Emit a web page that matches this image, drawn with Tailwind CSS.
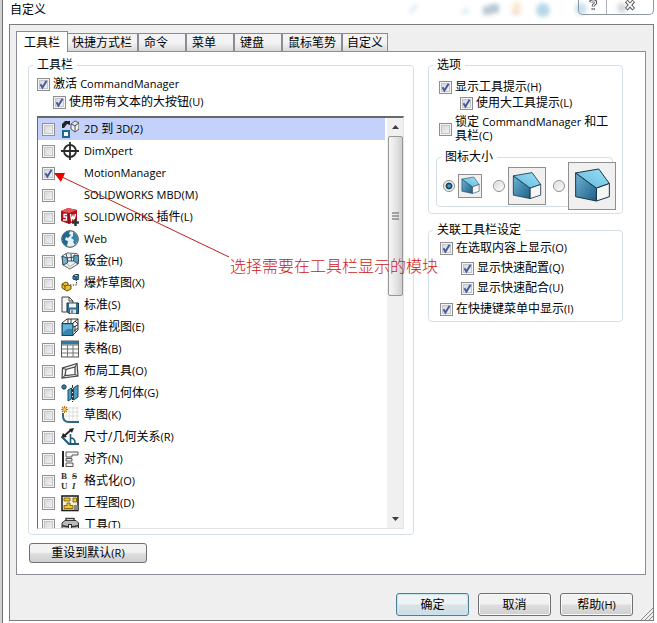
<!DOCTYPE html>
<html lang="zh-CN" class="bg-[#d2d2d2]">
<head>
    <meta charset="UTF-8">
    <meta name="viewport" content="width=device-width, initial-scale=1.0">
    <title>自定义</title>
    <script src="https://cdn.jsdelivr.net/npm/@tailwindcss/browser@4"></script>
</head>
<body class="relative ml-[2px] h-screen min-h-[560px] flex flex-col overflow-hidden bg-white border-l border-[#6f6f6f] pl-[6px] pr-[3px] pb-[2px] font-['Open_Sans','Noto_Sans_CJK_SC',sans-serif] text-xs text-black">

    <!-- shared shapes -->
    <svg class="absolute size-0">
        <linearGradient id="side" x1="0" y1="0" x2="1" y2="1"><stop offset="0" stop-color="#6fb4d6"/><stop offset="1" stop-color="#1d5f86"/></linearGradient>
        <linearGradient id="top" x1="0" y1="1" x2="1" y2="0"><stop offset="0" stop-color="#5fb6dc"/><stop offset="1" stop-color="#9be0f8"/></linearGradient>
        <symbol id="tick" viewBox="0 0 13 13"><path d="M3.5 6.2 5.4 9.6 9.6 2.8" fill="none" stroke="#45589b" stroke-width="1.9"/></symbol>
        <symbol id="cube" viewBox="0 0 112 112">
            <g stroke="#16323f" stroke-width="3" stroke-linejoin="round">
                <path d="M5 18 68 64V103L5 90Z" fill="url(#side)"/>
                <path d="M5 18 75 6 107 50 68 64Z" fill="url(#top)"/>
                <path d="M68 64 107 50V90L68 103Z" fill="#f4f6f7"/>
            </g>
        </symbol>
    </svg>

    <!-- title bar -->
    <header class="relative h-6 shrink-0 flex items-start justify-between">
        <svg class="absolute right-0 top-0 w-[250px] h-5 blur-[2px] opacity-80" viewBox="0 0 250 20">
            <path d="M6 13 13 5" stroke="#d3e6f3" stroke-width="4"/>
            <path d="M56 14 64 6V14Z" fill="#cde6f2"/>
            <rect x="79" y="6" width="9" height="9" fill="#a9bcc9"/><rect x="86" y="4" width="9" height="9" fill="#a3b9c9"/>
            <rect x="109" y="3" width="8" height="5" fill="#f8dfae"/><rect x="108" y="9" width="8" height="6" fill="#f3d3c4"/>
            <circle cx="139" cy="10" r="7" fill="#a5cfe4"/>
            <circle cx="177" cy="9" r="6" fill="#b8d9ea"/><circle cx="218" cy="8" r="5" fill="#c9ccd0"/>
        </svg>
        <h1 class="pl-px leading-[19px]">自定义</h1>
        <div class="relative flex h-[15px] w-[76px] rounded-b-[5px] border border-t-0 border-[#8f979e] overflow-hidden">
            <button class="w-[28px] border-r border-[#a9b0b6] flex justify-center" aria-label="帮助">
                <svg class="w-3 h-[11px]" viewBox="0 0 12 12" fill="none"><path d="M3.3 2.5C4 0 9.3 0 8.9 3 8.6 4.8 6.2 4.6 6.2 7M6.2 8.6V11" stroke="#4b4f55" stroke-width="3.4"/><path d="M3.5 2.3C4.4.4 9 .4 8.8 3 8.6 4.6 6.2 4.6 6.2 6.8M6.2 9V10.6" stroke="#fff" stroke-width="1.4"/></svg>
            </button>
            <button class="flex-1 flex justify-center" aria-label="关闭">
                <svg class="w-3 h-[11px]" viewBox="0 0 12 12" fill="none"><path d="M2 1 10 10M10 1 2 10" stroke="#4b4f55" stroke-width="4"/><path d="M2.500 1.500 9.500 9.500M9.500 1.500 2.500 9.500" stroke="#fff" stroke-width="2"/></svg>
            </button>
        </div>
    </header>

    <main class="relative flex-1 min-h-0 flex flex-col border border-[#7c7c7c] bg-[#efefef] pl-[6px] pr-[7px]">
        <!-- tabs -->
        <nav class="h-[26px] shrink-0 flex items-end text-left">
            <button class="relative -mb-px h-[21px] px-[7px] border border-b-0 border-[#898c95] bg-white text-left leading-[17px]">工具栏</button>
            <button class="h-[18px] pl-1 pr-[5px] border border-l-0 border-b-0 border-[#898c95] bg-linear-to-b from-[#f3f3f3] from-50% to-[#d9d9d9] text-left leading-[17px]">快捷方式栏</button>
            <button class="h-[18px] min-w-12 px-[5px] border border-b-0 border-[#898c95] bg-linear-to-b from-[#f3f3f3] from-50% to-[#d9d9d9] text-left leading-[17px]">命令</button>
            <button class="h-[18px] min-w-12 px-[5px] border border-b-0 border-[#898c95] bg-linear-to-b from-[#f3f3f3] from-50% to-[#d9d9d9] text-left leading-[17px]">菜单</button>
            <button class="h-[18px] min-w-12 px-[5px] border border-b-0 border-[#898c95] bg-linear-to-b from-[#f3f3f3] from-50% to-[#d9d9d9] text-left leading-[17px]">键盘</button>
            <button class="h-[18px] px-[5px] border border-b-0 border-[#898c95] bg-linear-to-b from-[#f3f3f3] from-50% to-[#d9d9d9] text-left leading-[17px]">鼠标笔势</button>
            <button class="h-[18px] px-1 border border-b-0 border-[#898c95] bg-linear-to-b from-[#f3f3f3] from-50% to-[#d9d9d9] text-left leading-[17px]">自定义</button>
        </nav>

        <!-- tab page -->
        <section class="flex-1 min-h-0 flex flex-col border border-[#898c95] bg-white pl-[11px] pr-[22px] pt-[5px] pb-[11px]">
            <div class="flex-1 min-h-0 flex gap-[14px]">

                <fieldset class="flex-1 min-w-0 flex flex-col rounded-[4px] border border-[#d5dfe5] pl-2 pr-[9px] pt-[2px] pb-[5px]">
                    <legend class="-ml-1 px-1 leading-4">工具栏</legend>
                    <label class="flex items-center gap-[3px] h-[18px]"><span class="grid shrink-0"><input type="checkbox" checked class="peer col-start-1 row-start-1 size-[13px] appearance-none border border-[#8e8f8f] bg-linear-to-br from-[#cfd3d8] to-[#f7f7f7] shadow-[inset_0_0_0_1px_#f4f4f4,inset_0_0_0_2px_#c3c7cd]"><svg class="hidden peer-checked:block col-start-1 row-start-1 size-[13px] pointer-events-none"><use href="#tick"/></svg></span><span>激活 <span class="text-[11px]">CommandManager</span></span></label>
                    <label class="flex items-center gap-[3px] h-[18px] pl-4"><span class="grid shrink-0"><input type="checkbox" checked class="peer col-start-1 row-start-1 size-[13px] appearance-none border border-[#8e8f8f] bg-linear-to-br from-[#cfd3d8] to-[#f7f7f7] shadow-[inset_0_0_0_1px_#f4f4f4,inset_0_0_0_2px_#c3c7cd]"><svg class="hidden peer-checked:block col-start-1 row-start-1 size-[13px] pointer-events-none"><use href="#tick"/></svg></span><span>使用带有文本的大按钮<span class="text-[11px]">(U)</span></span></label>

                    <div class="mt-[5px] flex-1 min-h-0 flex border-l border-t-2 border-r border-b border-l-[#696969] border-t-[#696969] border-r-[#e3e3e3] border-b-[#e3e3e3]">
                        <ul id="toolbars" class="flex-1 overflow-hidden"></ul>
                        <div class="w-[18px] shrink-0 flex flex-col items-center bg-[#f0f0f0] border-l-2 border-white">
                            <button class="h-[18px] w-full grid place-items-center" aria-label="向上"><svg class="w-[7px] h-1" viewBox="0 0 7 4"><path d="M0 4 3.5 0 7 4Z" fill="#3c3c3c"/></svg></button>
                            <div class="h-[39%] w-[15px] rounded-[2px] border border-[#979797] bg-linear-to-r from-[#f5f5f5] via-[#e6e6e6] to-[#cfcfcf] grid place-items-center">
                                <svg class="w-[7px] h-2" viewBox="0 0 7 8"><path d="M0 1H7M0 4H7M0 7H7" stroke="#5c5c5c"/></svg>
                            </div>
                            <button class="mt-auto h-[18px] w-full grid place-items-center" aria-label="向下"><svg class="w-[7px] h-1" viewBox="0 0 7 4"><path d="M0 0 3.5 4 7 0Z" fill="#3c3c3c"/></svg></button>
                        </div>
                    </div>
                </fieldset>

                <div class="w-[195px] shrink-0 flex flex-col gap-2">
                    <fieldset class="min-w-0 rounded-[4px] border border-[#d5dfe5] pt-[6px] pb-[6px]">
                        <legend class="ml-1 px-1 leading-4">选项</legend>
                        <label class="flex items-center gap-[3px] h-4 pl-[10px]"><span class="grid shrink-0"><input type="checkbox" checked class="peer col-start-1 row-start-1 size-[13px] appearance-none border border-[#8e8f8f] bg-linear-to-br from-[#cfd3d8] to-[#f7f7f7] shadow-[inset_0_0_0_1px_#f4f4f4,inset_0_0_0_2px_#c3c7cd]"><svg class="hidden peer-checked:block col-start-1 row-start-1 size-[13px] pointer-events-none"><use href="#tick"/></svg></span><span>显示工具提示<span class="text-[11px]">(H)</span></span></label>
                        <label class="flex items-center gap-[3px] h-4 pl-[31px]"><span class="grid shrink-0"><input type="checkbox" checked class="peer col-start-1 row-start-1 size-[13px] appearance-none border border-[#8e8f8f] bg-linear-to-br from-[#cfd3d8] to-[#f7f7f7] shadow-[inset_0_0_0_1px_#f4f4f4,inset_0_0_0_2px_#c3c7cd]"><svg class="hidden peer-checked:block col-start-1 row-start-1 size-[13px] pointer-events-none"><use href="#tick"/></svg></span><span>使用大工具提示<span class="text-[11px]">(L)</span></span></label>
                        <label class="mt-1 flex items-center gap-[3px] pl-[10px] leading-[14px]"><span class="grid shrink-0"><input type="checkbox" class="peer col-start-1 row-start-1 size-[13px] appearance-none border border-[#8e8f8f] bg-linear-to-br from-[#cfd3d8] to-[#f7f7f7] shadow-[inset_0_0_0_1px_#f4f4f4,inset_0_0_0_2px_#c3c7cd]"><svg class="hidden peer-checked:block col-start-1 row-start-1 size-[13px] pointer-events-none"><use href="#tick"/></svg></span><span>锁定 <span class="text-[11px]">CommandManager</span> 和工<br>具栏<span class="text-[11px]">(C)</span></span></label>

                        <fieldset class="mt-[6px] ml-[7px] mr-[9px] min-w-0 rounded-[4px] border border-[#d5dfe5] pl-[6px]">
                            <legend class="-ml-[2px] px-1 leading-4">图标大小</legend>
                            <div class="h-[41px] flex items-center">
                                <label class="mr-[11px] shrink-0 flex items-center gap-[3px]">
                                    <input type="radio" name="size" checked aria-label="小" class="size-3 appearance-none rounded-full border border-[#8e8f8f] bg-linear-to-br from-[#d5d7da] to-white shadow-[inset_0_0_0_1px_#f4f4f4] checked:bg-radial checked:from-[#4aa3cf] checked:from-10% checked:via-[#16394d] checked:via-40% checked:to-[#e8eef2] checked:to-55%">
                                    <span class="size-6 grid place-items-center border border-[#8e8f8f] bg-[#f0f0f0]"><svg class="size-[19px]"><use href="#cube"/></svg></span>
                                </label>
                                <label class="mr-[7px] shrink-0 flex items-center gap-[3px]">
                                    <input type="radio" name="size" aria-label="中" class="size-3 appearance-none rounded-full border border-[#8e8f8f] bg-linear-to-br from-[#d5d7da] to-white shadow-[inset_0_0_0_1px_#f4f4f4]">
                                    <span class="size-[38px] grid place-items-center border border-[#8e8f8f] bg-[#f0f0f0]"><svg class="size-[30px]"><use href="#cube"/></svg></span>
                                </label>
                                <label class="shrink-0 flex items-center gap-[3px]">
                                    <input type="radio" name="size" aria-label="大" class="size-3 appearance-none rounded-full border border-[#8e8f8f] bg-linear-to-br from-[#d5d7da] to-white shadow-[inset_0_0_0_1px_#f4f4f4]">
                                    <span class="size-12 grid place-items-center border border-[#8e8f8f] bg-[#f0f0f0]"><svg class="size-[37px]"><use href="#cube"/></svg></span>
                                </label>
                            </div>
                        </fieldset>
                    </fieldset>

                    <fieldset class="min-w-0 rounded-[4px] border border-[#d5dfe5] pb-[2px]">
                        <legend class="ml-1 px-1 leading-4">关联工具栏设定</legend>
                        <label class="flex items-center gap-[3px] h-5 pl-[11px]"><span class="grid shrink-0"><input type="checkbox" checked class="peer col-start-1 row-start-1 size-[13px] appearance-none border border-[#8e8f8f] bg-linear-to-br from-[#cfd3d8] to-[#f7f7f7] shadow-[inset_0_0_0_1px_#f4f4f4,inset_0_0_0_2px_#c3c7cd]"><svg class="hidden peer-checked:block col-start-1 row-start-1 size-[13px] pointer-events-none"><use href="#tick"/></svg></span><span>在选取内容上显示<span class="text-[11px]">(O)</span></span></label>
                        <label class="flex items-center gap-[3px] h-5 pl-8"><span class="grid shrink-0"><input type="checkbox" checked class="peer col-start-1 row-start-1 size-[13px] appearance-none border border-[#8e8f8f] bg-linear-to-br from-[#cfd3d8] to-[#f7f7f7] shadow-[inset_0_0_0_1px_#f4f4f4,inset_0_0_0_2px_#c3c7cd]"><svg class="hidden peer-checked:block col-start-1 row-start-1 size-[13px] pointer-events-none"><use href="#tick"/></svg></span><span>显示快速配置<span class="text-[11px]">(Q)</span></span></label>
                        <label class="flex items-center gap-[3px] h-5 pl-8"><span class="grid shrink-0"><input type="checkbox" checked class="peer col-start-1 row-start-1 size-[13px] appearance-none border border-[#8e8f8f] bg-linear-to-br from-[#cfd3d8] to-[#f7f7f7] shadow-[inset_0_0_0_1px_#f4f4f4,inset_0_0_0_2px_#c3c7cd]"><svg class="hidden peer-checked:block col-start-1 row-start-1 size-[13px] pointer-events-none"><use href="#tick"/></svg></span><span>显示快速配合<span class="text-[11px]">(U)</span></span></label>
                        <label class="mt-px flex items-center gap-[3px] h-5 pl-[11px]"><span class="grid shrink-0"><input type="checkbox" checked class="peer col-start-1 row-start-1 size-[13px] appearance-none border border-[#8e8f8f] bg-linear-to-br from-[#cfd3d8] to-[#f7f7f7] shadow-[inset_0_0_0_1px_#f4f4f4,inset_0_0_0_2px_#c3c7cd]"><svg class="hidden peer-checked:block col-start-1 row-start-1 size-[13px] pointer-events-none"><use href="#tick"/></svg></span><span>在快捷键菜单中显示<span class="text-[11px]">(I)</span></span></label>
                    </fieldset>
                </div>
            </div>

            <button class="mt-2 ml-px self-start w-[118px] h-5 flex items-center justify-center rounded-[3px] border border-[#707070] bg-linear-to-b from-[#f2f2f2] from-45% via-[#dddddd] via-55% to-[#cfcfcf]"><span>重设到默认<span class="text-[11px]">(R)</span></span></button>
        </section>

        <footer class="shrink-0 flex justify-end gap-[9px] pt-[18px] pb-1 pr-[13px]">
            <button class="w-[73px] h-[23px] rounded-[3px] border border-[#4d7f99] bg-linear-to-b from-[#eef3f5] from-45% via-[#d9e3e8] via-55% to-[#cbdde4] shadow-[inset_0_0_0_1px_#c3e6f1]">确定</button>
            <button class="w-[73px] h-[23px] rounded-[3px] border border-[#707070] bg-linear-to-b from-[#f2f2f2] from-45% via-[#dddddd] via-55% to-[#cfcfcf] shadow-[inset_0_0_0_1px_#f8f8f8]">取消</button>
            <button class="w-[73px] h-[23px] rounded-[3px] border border-[#707070] bg-linear-to-b from-[#f2f2f2] from-45% via-[#dddddd] via-55% to-[#cfcfcf] shadow-[inset_0_0_0_1px_#f8f8f8]">帮助<span class="text-[11px]">(H)</span></button>
        </footer>
        <svg class="absolute right-0 bottom-0 size-3" viewBox="0 0 12 12"><path d="M0 12 12 0M4 12 12 4M8 12 12 8" stroke="#8a8a8a"/></svg>
    </main>

    <!-- red note with its arrow -->
    <div class="absolute left-[51px] top-[170px] pointer-events-none text-[#d01818]">
        <svg class="w-[176px] h-[90px]" viewBox="0 0 176 90"><path d="M6 6 175 87" stroke="#c02020"/><path d="M0 3 11 3 7 12Z" fill="#e80000"/></svg>
        <p class="absolute left-44 top-[83px] whitespace-nowrap text-base leading-6 font-light font-['Noto_Sans_CJK_SC',sans-serif]">选择需要在工具栏显示的模块</p>
    </div>

    <script>
        // latin part, chinese part, rest of the name, icon
        const toolbars = [
            ['2D ', '到', ' 3D(2)', '<path d="M1 8V4L4 1H9V5L6 4 3 8Z" fill="#222"/><path d="M10 4 14 1 18 3V9L14 12 10 9ZM10 4 14 6 18 3M14 6V12" fill="#f3f3f3" stroke="#555"/><rect x="2" y="11" width="6" height="6" fill="#fff" stroke="#1e6a8c" stroke-width="2"/>'],
            ['DimXpert', '', '', '<circle cx="9" cy="9" r="6" fill="none" stroke="#2b2b2b" stroke-width="1.8"/><path d="M9 0V18M0 9H18" stroke="#2b2b2b" stroke-width="1.8"/>'],
            ['MotionManager', '', '', ''],
            ['SOLIDWORKS MBD(M)', '', '', ''],
            ['SOLIDWORKS ', '插件', '(L)', '<path d="M0 3 7 0 16 2V13L8 16 0 13Z" fill="#b3121d"/><path d="M0 3 8 5 16 2 7 0Z" fill="#e2575c"/><path d="M8 5V16" stroke="#7d0b12"/><path d="M6 6.500H3V9H5.500V12H2M9.500 6 10.500 12 12 8 13 12 14.500 6" fill="none" stroke="#fff" stroke-width="1.3"/><path d="M14.500 11V18M11 14.500H18" stroke="#333" stroke-width="2.500"/>'],
            ['Web', '', '', '<circle cx="9" cy="9" r="8.300" fill="#e8f2f6" stroke="#2c4a5c"/><path d="M1 8C2 3 6 1 9 1L8 4 10 5 7 8 5 7 4 10 7 11 6 16C3 15 1 12 1 8Z" fill="#23698f"/><path d="M12 2C16 4 17 7 17 10L14 15 12 12 13 10 10 8 12 6Z" fill="#3383aa"/>'],
            ['', '钣金', '(H)', '<path d="M1 4 6 1 16 1.500 18 4 17 12 9 17 2 13Z" fill="#eef2f3" stroke="#666"/><path d="M1 4 6 6 6.500 11 2 13Z" fill="#7fb2ca" stroke="#33505e"/><path d="M13 3 18 4 17 12 12.500 9Z" fill="#5a9dbd" stroke="#33505e"/><path d="M5 1.500 7 9 12.500 9M10 2 10.500 9M6 6 13 5" fill="none" stroke="#33505e"/><path d="M6 12 9 14.500 14 11" fill="none" stroke="#aaa"/>'],
            ['', '爆炸草图', '(X)', '<path d="M1 10 5 8 7 9 7 11 10 12 10 15 6 17 1 14Z" fill="#f0c030" stroke="#6b500a"/><path d="M1 10 4 12V15M4 12 7 11" fill="none" stroke="#6b500a"/><path d="M9 11H15.500V6" fill="none" stroke="#333" stroke-dasharray="1.500 1.200"/><path d="M12 2 15 0 18 1V5L15 6 12 5ZM12 2 15 3 18 1M15 3V6" fill="#3d88ad" stroke="#1c4055"/>'],
            ['', '标准', '(S)', '<path d="M1 16V1H8L12 5V16Z" fill="#f6f6f6" stroke="#444"/><path d="M8 1V5H12" fill="none" stroke="#444"/><path d="M6 7H17.500V17.500H8L6 15.500Z" fill="#2d6f91" stroke="#17394b"/><rect x="8" y="7.500" width="7" height="4" fill="#f2f2f2"/><rect x="9" y="13.500" width="6" height="4" fill="#e0e0e0"/><path d="M11 14V17" stroke="#17394b"/>'],
            ['', '标准视图', '(E)', '<path d="M1 5 6 1H17V12L12 17M12 5 17 1M7 1V5M17 7 12 9M10 1V5" fill="none" stroke="#333"/><path d="M14 3 17 6M13 13 17 10M14 8V14" stroke="#333"/><rect x="1" y="5.500" width="11" height="12" fill="#3387ae" stroke="#1c4358"/><path d="M2 6.500H11V11Q5 10 2 15Z" fill="#69b4d6"/>'],
            ['', '表格', '(B)', '<rect x=".5" y="1" width="17" height="16" fill="#fafafa" stroke="#555"/><rect x="1" y="1" width="16" height="3.500" fill="#2d7ba1"/><path d="M.500 5H17.500M1 9H17M1 13H17M6.500 5V17M12 5V17" stroke="#777"/>'],
            ['', '布局工具', '(O)', '<path d="M1 16 1.500 6 16 1.500 17 14ZM4 13.500 5 7.500 14 5 14 12.500Z" fill="#eee" fill-rule="evenodd" stroke="#444" stroke-width="1.200"/><path d="M1.500 6 5 7.500M16 1.500 14 5M17 14 14 12.500M1 16 4 13.500" stroke="#444"/>'],
            ['', '参考几何体', '(G)', '<circle cx="3" cy="3" r="2.200" fill="#2c7ba1" stroke="#1a4960"/><path d="M7 6 10.500 4V15L7 17ZM12.500 4 17 1V13L12.500 16Z" fill="#4c9cc1" stroke="#1a4960"/><path d="M11.500 1V18" stroke="#333" stroke-dasharray="3 1"/>'],
            ['', '草图', '(K)', '<path d="M8 2H18M8 6H18M4 10H18M8 1V15M12 1V15M16 1V15" stroke="#ddd"/><path d="M2 7V10Q2 16 8 16H18" fill="none" stroke="#2b6886" stroke-width="2"/><path d="M3.500 0V7M0 3.500H7M1 1 6 6M6 1 1 6" stroke="#c46a14" stroke-width="1.100"/><circle cx="3.500" cy="3.500" r="1.500" fill="#ffc65a"/>'],
            ['', '尺寸/几何关系', '(R)', '<path d="M3 8 10 2" stroke="#222" stroke-width="1.800"/><path d="M0 10 2 5 6 9ZM13 0 11 5 8 1Z" fill="#222"/><path d="M1 9 8 16H18" fill="none" stroke="#1e5977" stroke-width="2"/><path d="M9.500 6V16M9.500 10Q14 10 14 15" fill="none" stroke="#1e5977" stroke-width="1.600"/>'],
            ['', '对齐', '(N)', '<path d="M2 1V17" stroke="#222" stroke-width="2"/><path d="M5 2H17V5H11V7H5ZM5 8.500H11V11H5ZM5 13H12V16.500H5Z" fill="#f6f6f6" stroke="#555"/>'],
            ['', '格式化', '(O)', '<g fill="#333"><text x="0" y="7">B</text><text x="11" y="7" text-decoration="line-through">S</text><text x="0" y="17" text-decoration="underline">U</text><text x="11" y="17" font-style="italic">I</text></g>'],
            ['', '工程图', '(D)', '<rect x="1" y="2" width="16" height="14.500" fill="#f5f0dc" stroke="#222" stroke-width="1.600"/><path d="M3 4H9V7H3ZM12 4H15.500V8H12Z" fill="#f2c52c" stroke="#6d5200" stroke-width=".8"/><path d="M6 9H9V11.500H12V14.500H3V11.500H6Z" fill="#f2c52c" stroke="#6d5200" stroke-width=".8"/><rect x="13" y="11" width="4" height="5" fill="#888"/>'],
            ['', '工具', '(T)', '<path d="M5 5V2.500H13V5" fill="none" stroke="#444" stroke-width="1.500"/><path d="M1 7 4 4.500H15L17.500 7V16H1Z" fill="#bbb" stroke="#333"/><path d="M1 9.500Q9 12 17.500 9.500" fill="none" stroke="#333" stroke-width="1.500"/><rect x="7.500" y="8.500" width="3" height="4" fill="#eee" stroke="#333"/>'],
        ];

        document.getElementById('toolbars').innerHTML = toolbars.map(([latin, name, rest, icon], i) => `
            <li class="first:bg-[#c3d1fb]">
                <label class="flex items-center h-[22px] pl-1">
                    <span class="grid shrink-0"><input type="checkbox" ${i === 2 ? 'checked' : ''} class="peer col-start-1 row-start-1 size-[13px] appearance-none border border-[#8e8f8f] bg-linear-to-br from-[#cfd3d8] to-[#f7f7f7] shadow-[inset_0_0_0_1px_#f4f4f4,inset_0_0_0_2px_#c3c7cd]"><svg class="hidden peer-checked:block col-start-1 row-start-1 size-[13px] pointer-events-none"><use href="#tick"/></svg></span>
                    <svg class="ml-[6px] mr-[5px] size-[18px] shrink-0 font-['Liberation_Serif',serif] text-[9px] font-bold" viewBox="0 0 18 18">${icon}</svg>
                    <span class="whitespace-nowrap text-[11px]">${latin}<span class="text-xs">${name}</span>${rest}</span>
                </label>
            </li>`).join('');
    </script>
</body>
</html>
